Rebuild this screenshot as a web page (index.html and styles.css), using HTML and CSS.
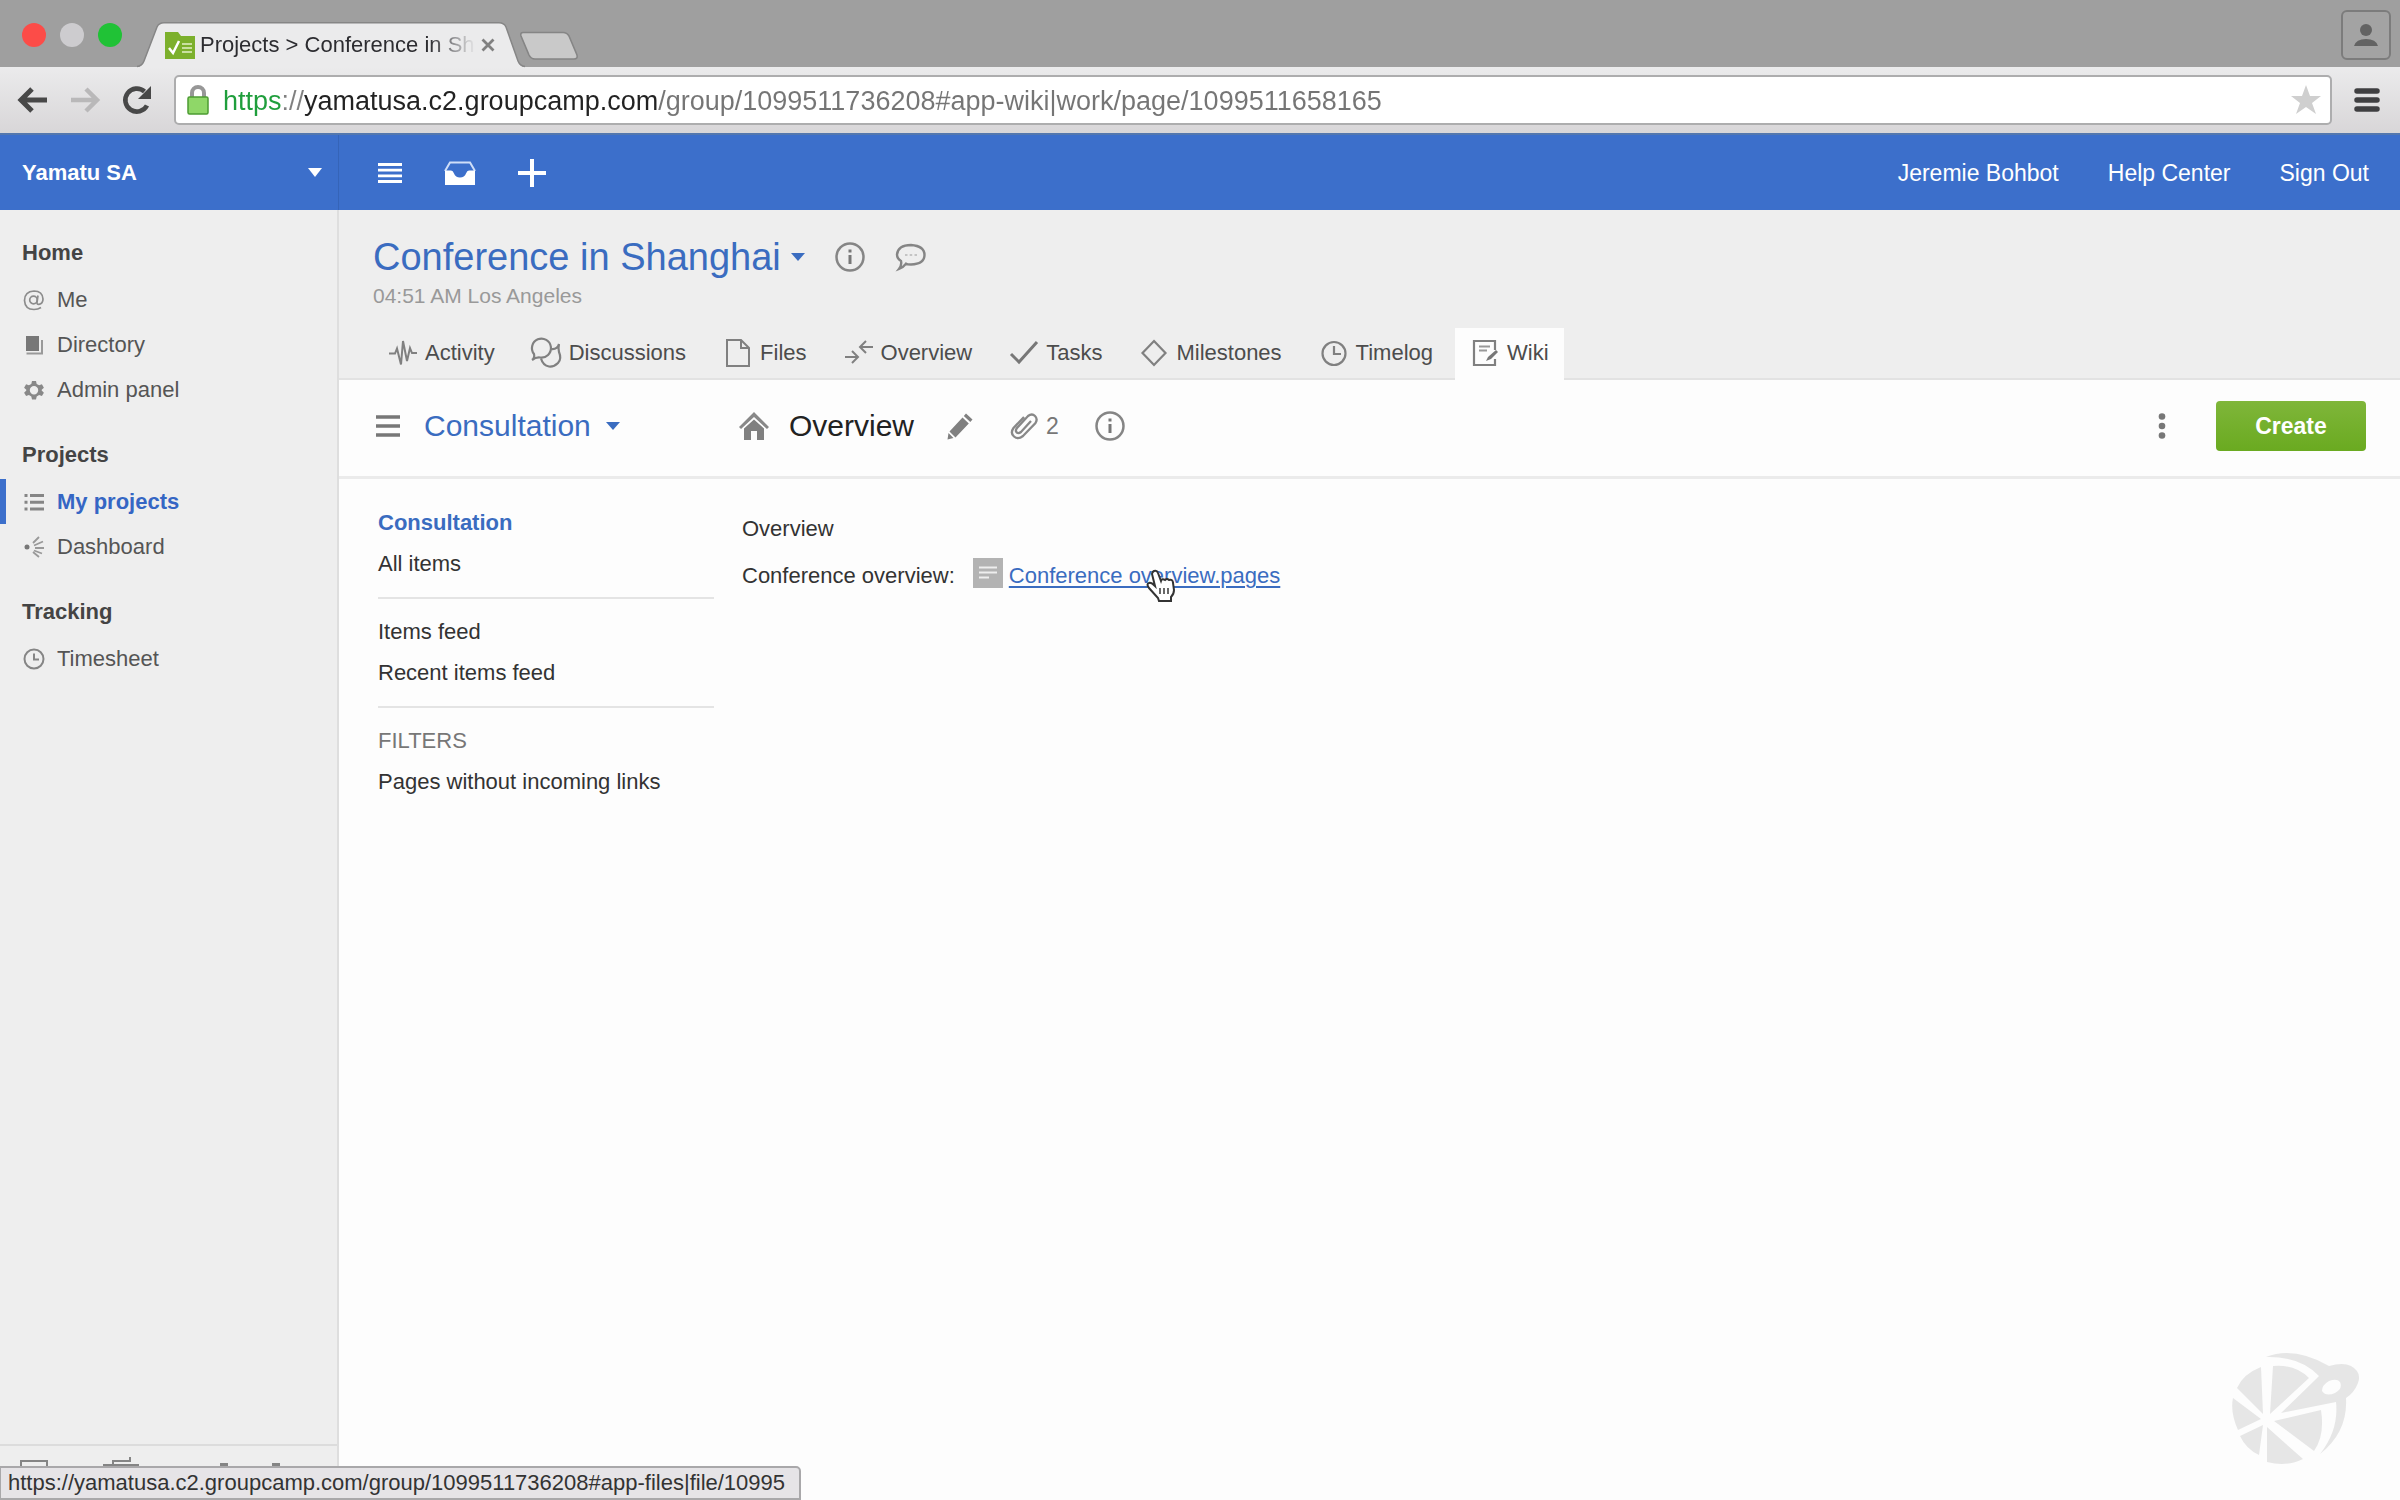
FILE: index.html
```html
<!DOCTYPE html>
<html lang="en">
<head>
<meta charset="utf-8">
<title>Projects &gt; Conference in Shanghai</title>
<link rel="stylesheet" href="styles.css">
</head>
<body>
<div class="browser">
  <div class="tabstrip">
    <div class="lights"><i class="light red"></i><i class="light idle"></i><i class="light green"></i></div>
    <div class="tab">
      <svg class="tab-shape" viewBox="0 0 388 45" width="388" height="45"><path d="M0 45 Q5 45 7 39 L20 5 Q22 .8 27 .8 H362 Q367 .8 369 5 L381 39 Q383 45 388 45Z" fill="#ebebec"/><path d="M0 44.500 Q5 44 7 39 L20 5 Q22 .8 27 .8 H362 Q367 .8 369 5 L381 39 Q383 44 388 44.500" fill="none" stroke="#868686" stroke-width="1.500"/></svg>
      <svg class="favicon" viewBox="0 0 30 28" width="30" height="28"><path d="M0 1h13l3 4h14v23H0z" fill="#7cb02c"/><path d="M4 17l4 5 6-12" fill="none" stroke="#fff" stroke-width="2.500"/><path d="M17 13h10M17 17h10M17 21h10" stroke="#c9e09f" stroke-width="2.200"/></svg>
      <span class="tab-title">Projects &gt; Conference in Sh</span>
      <button class="tab-close" aria-label="Close tab"><svg viewBox="0 0 14 14" width="14" height="14"><path d="M1.500 1.500l11 11M12.500 1.500l-11 11" stroke="#808080" stroke-width="2.800"/></svg></button>
    </div>
    <button class="new-tab" aria-label="New tab"><svg viewBox="0 0 60 30" width="60" height="30"><path d="M4 1.500H44Q48 1.500 50 5L58 24Q59 28 55 28H16Q12 28 10 24L2 5Q1 1.500 4 1.500Z" fill="#c9c9c9" stroke="#858585" stroke-width="1.600"/></svg></button>
    <button class="profile" aria-label="Profile"><svg viewBox="0 0 24 24" width="24" height="24"><circle cx="12" cy="7" r="6" fill="#636363"/><path d="M0 23q2-7 12-7t12 7z" fill="#636363"/></svg></button>
  </div>
  <div class="navbar">
    <button aria-label="Back"><svg viewBox="0 0 30 26" width="30" height="26"><path d="M14 2L3 13l11 11M3 13h26" fill="none" stroke="#484848" stroke-width="5"/></svg></button>
    <button aria-label="Forward"><svg viewBox="0 0 30 26" width="30" height="26"><path d="M16 2l11 11-11 11M27 13H1" fill="none" stroke="#b9b8b9" stroke-width="4.500"/></svg></button>
    <button aria-label="Reload"><svg viewBox="0 0 30 30" width="30" height="30"><path d="M25 20.500A11.500 11.500 0 1 1 22.500 6.500" fill="none" stroke="#484848" stroke-width="4.600"/><path d="M29 1v13H16z" fill="#484848"/></svg></button>
    <div class="address">
      <svg viewBox="0 0 22 30" width="22" height="30"><path d="M5 14V8a6 6 0 0 1 12 0v6" fill="none" stroke="#979797" stroke-width="4"/><rect x="1" y="12" width="20" height="17" rx="1.500" fill="#8fd768" stroke="#4c9c32" stroke-width="1.500"/></svg>
      <input class="url" type="text" aria-label="Address" value="https://yamatusa.c2.groupcamp.com/group/1099511736208#app-wiki|work/page/1099511658165">
      <button aria-label="Bookmark"><svg viewBox="0 0 32 32" width="32" height="32"><path d="M16 1l4 11h11l-9 7 4 11-10-7-10 7 4-11-9-7h11z" fill="#cfcfcf"/></svg></button>
    </div>
    <button aria-label="Menu"><svg viewBox="0 0 26 26" width="26" height="26"><path d="M3 4h20M3 13h20M3 22h20" stroke="#3f3f41" stroke-width="5.500" stroke-linecap="round"/></svg></button>
  </div>
</div>

<header class="topbar">
  <button class="account">Yamatu SA <svg viewBox="0 0 14 9" width="14" height="9"><path d="M0 0h14L7 9z" fill="#fff"/></svg></button>
  <div class="quick">
    <button aria-label="Menu"><svg viewBox="0 0 24 20" width="24" height="20"><path d="M0 1.500h24M0 7.200h24M0 12.800h24M0 18.500h24" stroke="#fff" stroke-width="2.800"/></svg></button>
    <button aria-label="Inbox"><svg viewBox="0 0 32 24" width="32" height="24"><path d="M1 10L6 1.500h20l5 8.500" fill="none" stroke="#cfdef8" stroke-width="2"/><path d="M1 9.500h6q2 0 3 3 1.500 4 6 4t6-4q1-3 3-3h6V24H1z" fill="#fff"/></svg></button>
    <button aria-label="Add"><svg viewBox="0 0 28 28" width="28" height="28"><path d="M14 0v28M0 14h28" stroke="#fff" stroke-width="4"/></svg></button>
  </div>
  <nav class="user"><a href="#">Jeremie Bohbot</a><a href="#">Help Center</a><a href="#">Sign Out</a></nav>
</header>

<div class="app">
  <aside class="side">
    <nav>
      <h2>Home</h2>
      <a href="#"><svg viewBox="0 0 22 22" width="22" height="22"><g fill="none" stroke="#8c8c8c" stroke-width="1.700"><circle cx="10.500" cy="11" r="3.800"/><path d="M15 6.500l-1 6.500q-.4 2.500 2 2.300 4-.6 4-5.300Q19.500 2 11 2 1.500 2.500 1.500 11.500 2 20.500 11 20.500q4 0 7-2"/></g></svg>Me</a>
      <a href="#"><svg viewBox="0 0 22 22" width="22" height="22"><path d="M3 2h13v15H3z" fill="#777"/><path d="M3.500 19.500h15.500V6" fill="none" stroke="#999" stroke-width="2"/></svg>Directory</a>
      <a href="#"><svg viewBox="0 0 22 22" width="22" height="22"><path d="M9 2h4l.7 3 2.400 1.300 2.800-1 2 3.400-2.200 2.100v.8l2.200 2.100-2 3.400-2.800-1-2.400 1.300-.7 3H9l-.7-3-2.400-1.300-2.800 1-2-3.400 2.200-2.100v-.8L1.100 8.700l2-3.400 2.800 1L8.300 5zM11 7a4.200 4.200 0 1 0 0 8.400A4.200 4.200 0 0 0 11 7z" fill="#888" fill-rule="evenodd"/></svg>Admin panel</a>
      <h2>Projects</h2>
      <a href="#" class="current"><svg viewBox="0 0 22 22" width="22" height="22"><path d="M1.500 4.500h3M1.500 11.200h3M1.500 18h3M7 4.500h14M7 11.200h14M7 18h14" stroke="#858585" stroke-width="2.900"/></svg>My projects</a>
      <a href="#"><svg viewBox="0 0 22 22" width="22" height="22"><circle cx="4" cy="11" r="2.500" fill="#777"/><path d="M10 7l6-6M11 9.500l9-4M12 12h9M11 14.500l8 3M10 16l6 5" stroke="#999" stroke-width="1.800"/></svg>Dashboard</a>
      <h2>Tracking</h2>
      <a href="#"><svg viewBox="0 0 22 22" width="22" height="22"><g fill="none" stroke="#858585" stroke-width="2"><circle cx="11" cy="11" r="9.500"/><path d="M11 5.500V11.500h5"/></g></svg>Timesheet</a>
    </nav>
    <div class="side-foot">
      <svg viewBox="0 0 260 40" width="260" height="40"><path d="M1 30V1h26v29M93 5V1h17v-4" fill="none" stroke="#858585" stroke-width="2"/><path d="M83 6h36M200 5h8M252 5h8" stroke="#858585" stroke-width="4"/></svg>
    </div>
  </aside>

  <main class="main">
    <section class="head">
      <div class="title-row">
        <h1><button class="title">Conference in Shanghai <svg viewBox="0 0 14 8" width="14" height="8"><path d="M0 0h14L7 8z" fill="#3a6cc0"/></svg></button></h1>
        <button aria-label="Project info"><svg viewBox="0 0 30 30" width="30" height="30"><circle cx="15" cy="15" r="13.500" fill="none" stroke="#858585" stroke-width="2.500"/><path d="M15 7.500v3M15 13v9" stroke="#777" stroke-width="3"/></svg></button>
        <button aria-label="Chat"><svg viewBox="0 0 32 28" width="32" height="28"><path d="M6 18Q2 15.500 2 11.500 3 2 16 2q13.500 1 13.500 10T16 21.500q-4 0-5-.8Q8 24.500 4 26 7 22 6 18z" fill="none" stroke="#858585" stroke-width="2.400"/><path d="M10 12h2.500M14.700 12h2.500M19.500 12h2.500" stroke="#c4c4c4" stroke-width="2"/></svg></button>
      </div>
      <p class="clock">04:51 AM Los Angeles</p>
      <nav class="tabs">
        <a href="#"><svg viewBox="0 0 28 28" width="28" height="28"><path d="M0 14.500h6l2-5 4 16L14 2l4 20 3-13 2 5h5" fill="none" stroke="#808080" stroke-width="2"/></svg>Activity</a>
        <a href="#"><svg viewBox="0 0 28 30" width="28" height="30"><g fill="none" stroke="#808080" stroke-width="2.200"><path d="M-1 22q3-2 2-6a9.500 9.500 0 1 1 6 3.500Q3 19 -1 22z"/><path d="M18 11q6 1 8-5-1 4 0 8 3 7-1 11-4 4-9 3.500-6-1-8-8"/></g></svg>Discussions</a>
        <a href="#"><svg viewBox="0 0 28 28" width="28" height="28"><path d="M3 1h14l8 8v18H3zM17 1v8h8" fill="none" stroke="#808080" stroke-width="2"/></svg>Files</a>
        <a href="#"><svg viewBox="0 0 28 28" width="28" height="28"><path d="M0 18h12M7 12l6 6-6 6M28 8H16M21 2l-6 6 6 6" fill="none" stroke="#808080" stroke-width="2"/></svg>Overview</a>
        <a href="#"><svg viewBox="0 0 28 28" width="28" height="28"><path d="M1 15l8 8L27 3" fill="none" stroke="#777" stroke-width="3"/></svg>Tasks</a>
        <a href="#"><svg viewBox="0 0 28 28" width="28" height="28"><path d="M14 2l11.500 12L14 26 2.500 14z" fill="none" stroke="#808080" stroke-width="2.200"/></svg>Milestones</a>
        <a href="#"><svg viewBox="0 0 28 28" width="28" height="28"><g fill="none" stroke="#808080" stroke-width="2.200"><circle cx="14" cy="14.500" r="11.500"/><path d="M14 7v8h7"/></g></svg>Timelog</a>
        <a href="#" class="open"><svg viewBox="0 0 28 28" width="28" height="28"><path d="M24 11V2H3v24h21v-6" fill="none" stroke="#808080" stroke-width="2.200"/><path d="M8 7.500h11M8 11.500h8" stroke="#999" stroke-width="2"/><path d="M15 22l2-4 8-7 2 2-7 7z" fill="#777"/></svg>Wiki</a>
      </nav>
    </section>

    <section class="tools">
      <div class="space">
        <button aria-label="Toggle list"><svg viewBox="0 0 24 22" width="24" height="22"><path d="M0 2h24M0 11h24M0 20h24" stroke="#777" stroke-width="3.400"/></svg></button>
        <button class="space-name">Consultation <svg viewBox="0 0 14 8" width="14" height="8"><path d="M0 0h14L7 8z" fill="#3a6cc0"/></svg></button>
      </div>
      <svg class="home" viewBox="0 0 30 28" width="30" height="28"><path d="M15 0l15 15-2 2L15 5 2 17l-2-2z" fill="#888"/><path d="M15 7.500l10 9V28h-7v-9h-6v9H5V16.500z" fill="#808080"/></svg>
      <h2 class="page-title">Overview</h2>
      <button class="edit" aria-label="Edit"><svg viewBox="0 0 28 28" width="28" height="28"><path d="M20 1.500l6.500 6-2.200 2.500-6.500-6zM16.500 5.500l6.300 6L9.500 25.500 3.500 19.500zM2.500 21l5 5-6 1.500z" fill="#808080"/></svg></button>
      <button class="files"><svg viewBox="0 0 28 28" width="28" height="28"><path d="M21 9L11 20q-2.500 2-4.300.4T7 16L18 4q4-3 7 0t.5 7L13 24q-5 4-9 .5T3.500 16L14 5" fill="none" stroke="#888" stroke-width="2.300"/></svg>2</button>
      <button aria-label="Page info"><svg viewBox="0 0 30 30" width="30" height="30"><circle cx="15" cy="15" r="13.500" fill="none" stroke="#858585" stroke-width="2.500"/><path d="M15 7.500v3M15 13v9" stroke="#777" stroke-width="3"/></svg></button>
      <button class="more" aria-label="More"><svg viewBox="0 0 8 26" width="8" height="26"><circle cx="4" cy="3.500" r="3.300" fill="#777"/><circle cx="4" cy="13" r="3.300" fill="#777"/><circle cx="4" cy="22.500" r="3.300" fill="#777"/></svg></button>
      <button class="create">Create</button>
    </section>

    <section class="body">
      <nav class="lists">
        <div class="group"><a href="#" class="current">Consultation</a><a href="#">All items</a></div>
        <div class="group"><a href="#">Items feed</a><a href="#">Recent items feed</a></div>
        <div class="group"><h3>FILTERS</h3><a href="#">Pages without incoming links</a></div>
      </nav>
      <article class="page">
        <p>Overview</p>
        <p class="file-line">Conference overview:
          <svg class="doc" viewBox="0 0 30 30" width="30" height="30"><path d="M0 0h30v30H0z" fill="#b3b3b3"/><path d="M6 9.500h18M6 14.500h18M6 19.500h10" stroke="#eee" stroke-width="2.200"/></svg>
          <a href="#">Conference overview.pages<svg class="pointer" viewBox="0 0 30 34" width="30" height="34"><path d="M9 2q3-1 4 2l3 8q1-3 4-1 2-2 4 0 4-1 4 3l1 7q0 4-3 7v4H14l-1-3-9-10q-3-4 0-5 2-1 6 3L7 5q0-2 2-3z" fill="#fff" stroke="#333" stroke-width="2"/><path d="M15 19v6M19 19v6M23 19v6" stroke="#444" stroke-width="1.600"/></svg></a></p>
      </article>
    </section>
  </main>
</div>

<svg class="watermark" viewBox="0 0 130 116" width="130" height="116"><g fill="#e6e6e6"><path d="M34 5Q62-6 97 14q14-4 22 0 11 6 7 17-4 10-12 15 2 34-26 56 19-24 16-52L49 61 82 29l5-5Q68 4 34 5zM90 39q4 6 13 2 8-4 5-11-3-4-11-1-7 4-7 10z" fill-rule="evenodd"/><path d="M29 15q-18 7-24 21l26 26zM41 14q22-2 36 12L38 62zM1 46l28 21L6 78Q-2 60 1 46zM8 84l23-11-4 30Q14 97 8 84zM35 75l36 32q-16 8-36 3zM42 69l47-11q4 26-7 41z"/></g></svg>
<div class="status">https://yamatusa.c2.groupcamp.com/group/1099511736208#app-files|file/10995</div>
</body>
</html>
```
FILE: styles.css
```css
* { box-sizing: border-box; }

body {
  margin: 0;
  min-height: 100vh;
  display: flex;
  flex-direction: column;
  position: relative;
  background: #fdfdfd;
  color: #333;
  font: 22px/26px "Liberation Sans", Arial, sans-serif;
}

svg { display: block; flex: none; overflow: visible; }
a { color: inherit; text-decoration: none; }
h1, h2, h3, p { margin: 0; font: inherit; }
button {
  margin: 0;
  padding: 0;
  border: 0;
  background: none;
  color: inherit;
  font: inherit;
  display: flex;
  align-items: center;
}

/* Browser frame */
.tabstrip {
  height: 67px;
  padding: 0 9px 0 22px;
  display: flex;
  align-items: flex-end;
  background: #9f9f9f;
}
.lights { display: flex; gap: 14px; padding-bottom: 20px; }
.light { width: 24px; height: 24px; border-radius: 50%; }
.red { background: #fc4c48; }
.idle { background: #cdcccf; }
.green { background: #20c236; }
.tab {
  position: relative;
  width: 386px;
  height: 45px;
  margin-left: 15px;
  padding: 0 28px;
  display: flex;
  align-items: center;
  gap: 5px;
}
.tab-shape { position: absolute; left: 0; top: 0; }
.favicon, .tab-title, .tab-close { position: relative; }
.tab-title {
  flex: 1;
  overflow: hidden;
  white-space: nowrap;
  color: #2c2c30;
  -webkit-mask-image: linear-gradient(90deg, #000 83%, transparent);
  mask-image: linear-gradient(90deg, #000 83%, transparent);
}
.new-tab { padding-bottom: 6px; margin-left: -4px; }
.profile {
  width: 50px;
  height: 50px;
  margin: 0 0 7px auto;
  justify-content: center;
  border: 2px solid #7c7c7c;
  border-radius: 6px;
  background: #a3a3a3;
}
.navbar {
  height: 66px;
  padding: 0 20px 0 18px;
  display: flex;
  align-items: center;
  gap: 22px;
  background: linear-gradient(#ebebec, #d8d6d8);
}
.address {
  flex: 1;
  height: 50px;
  padding: 0 8px 0 11px;
  display: flex;
  align-items: center;
  gap: 14px;
  border: 2px solid #adadae;
  border-radius: 5px;
  background: #fff;
}
.url {
  flex: 1;
  min-width: 0;
  padding: 2px 0 0;
  border: 0;
  outline: 0;
  font: 27px/34px "Liberation Sans", Arial, sans-serif;
  color: transparent;
  background: linear-gradient(90deg, #1f9e3c 58px, #808080 58px 81px, #222 81px 435px, #757575 435px);
  -webkit-background-clip: text;
  background-clip: text;
}

/* Application bar */
.topbar {
  height: 77px;
  display: flex;
  align-items: center;
  background: #3c6fcb;
  border-top: 2px solid #5377ae;
  color: #fff;
}
.account {
  width: 339px;
  height: 100%;
  padding: 0 16px 0 22px;
  justify-content: space-between;
  border-right: 1px solid #3564b8;
  font-weight: bold;
}
.quick { display: flex; align-items: center; gap: 42px; padding-left: 39px; }
.user {
  margin-left: auto;
  padding-right: 31px;
  display: flex;
  gap: 49px;
  font-size: 23px;
}

/* Side navigation */
.app { flex: 1; display: flex; }
.side {
  width: 339px;
  flex: none;
  display: flex;
  flex-direction: column;
  justify-content: space-between;
  background: #eee;
  border-right: 2px solid #dedede;
  color: #555;
}
.side h2 {
  padding: 30px 22px 11px;
  color: #444;
  font-weight: bold;
}
.side a {
  height: 45px;
  padding-left: 23px;
  display: flex;
  align-items: center;
  gap: 12px;
}
.side .current {
  padding-left: 17px;
  border-left: 6px solid #3c6fcb;
  color: #3566c4;
  font-weight: bold;
}
.side-foot {
  height: 56px;
  padding: 14px 20px 0;
  overflow: hidden;
  border-top: 2px solid #dcdcdc;
}

/* Project header */
.main { flex: 1; min-width: 0; display: flex; flex-direction: column; }
.head {
  padding: 25px 34px 0 34px;
  background: #eee;
  border-bottom: 2px solid #e2e2e2;
}
.title-row { display: flex; align-items: center; gap: 30px; height: 44px; }
.title {
  gap: 10px;
  color: #3a6cc0;
  font-size: 38px;
  line-height: 44px;
}
.clock { margin-top: 4px; color: #999; font-size: 21px; line-height: 26px; }
.tabs { display: flex; gap: 7px; margin-top: 19px; }
.tabs a {
  height: 50px;
  padding: 0 15px 0 16px;
  display: flex;
  align-items: center;
  gap: 8px;
  color: #4c4c4c;
}
.tabs .open { margin-bottom: -2px; background: #fdfdfd; padding-bottom: 2px; height: 52px; }

/* Page toolbar */
.tools {
  height: 99px;
  padding: 0 34px 4px 37px;
  display: flex;
  align-items: center;
  border-bottom: 3px solid #ebebeb;
}
.space { width: 363px; display: flex; gap: 24px; }
.space-name { gap: 15px; color: #3a6cc0; font-size: 30px; line-height: 36px; }
.page-title { margin-left: 20px; color: #222; font-size: 30px; line-height: 36px; }
.edit { margin-left: 32px; }
.files { margin: 0 36px; gap: 8px; color: #777; font-size: 23px; }
.more { margin-left: auto; }
.create {
  width: 150px;
  height: 50px;
  margin-left: 50px;
  justify-content: center;
  border-radius: 4px;
  background: linear-gradient(#7fb63a, #6aaa20);
  color: #fff;
  font-size: 23px;
  font-weight: bold;
}

/* Page body */
.body { display: flex; gap: 28px; padding: 23px 39px; color: #333; }
.lists { width: 336px; flex: none; }
.group { padding-bottom: 13px; margin-bottom: 12px; border-bottom: 2px solid #e4e4e4; }
.group:last-child { border: 0; }
.group a, .group h3 { display: block; line-height: 41px; }
.group h3 { color: #777; }
.group .current { color: #3a6cc0; font-weight: bold; }
.page { padding-top: 3px; }
.page p { line-height: 47px; }
.page .file-line { display: flex; align-items: center; }
.doc { margin: 0 6px 6px 18px; }
.page a {
  position: relative;
  color: #3a6cc0;
  text-decoration: underline;
  text-decoration-thickness: 2px;
  text-underline-offset: 3px;
}
.pointer { position: absolute; left: 136px; top: 17px; }

/* Overlays */
.watermark { position: absolute; right: 38px; bottom: 32px; }
.status {
  position: absolute;
  left: 0;
  bottom: 0;
  width: 801px;
  height: 34px;
  padding-left: 7px;
  overflow: hidden;
  white-space: nowrap;
  line-height: 30px;
  color: #333;
  background: #e6e4e7;
  border: 2px solid #a9a8aa;
  border-left-width: 1px;
  border-radius: 0 5px 0 0;
}
```
